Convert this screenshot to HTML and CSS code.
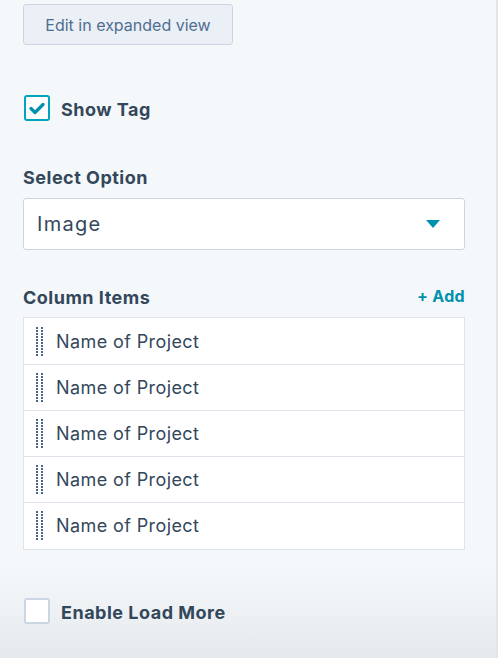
FILE: index.html
```html
<!DOCTYPE html>
<html>
<head>
<meta charset="utf-8">
<link rel="stylesheet" href="styles.css">
</head>
<body>
<svg width="0" height="0" class="defs">
  <defs>
    <pattern id="dots" width="5" height="3" patternUnits="userSpaceOnUse">
      <rect x="0" y="0" width="2" height="2" fill="#4a6684"/>
    </pattern>
  </defs>
</svg>
<div class="panel">
  <button class="btn">Edit in expanded view</button>

  <label class="check-row show-tag">
    <span class="box checked">
      <svg width="16" height="13" viewBox="0 0 16 13"><path d="M2 6.5 L6 10.5 L14 2.5" fill="none" stroke="#0091ae" stroke-width="3.2" stroke-linecap="round" stroke-linejoin="round"/></svg>
    </span>
    <span class="check-label">Show Tag</span>
  </label>

  <div class="field-label select-label">Select Option</div>
  <div class="select">
    <span>Image</span>
    <svg class="caret" width="14" height="8" viewBox="0 0 14 8"><path d="M0 0 H14 L7 8 Z" fill="#0091ae"/></svg>
  </div>

  <div class="list-head">
    <span class="field-label">Column Items</span>
    <span class="add">+ Add</span>
  </div>
  <div class="list">
    <div class="row"><svg class="handle" width="7" height="29"><rect width="7" height="29" fill="url(#dots)"/></svg><span>Name of Project</span></div>
    <div class="row"><svg class="handle" width="7" height="29"><rect width="7" height="29" fill="url(#dots)"/></svg><span>Name of Project</span></div>
    <div class="row"><svg class="handle" width="7" height="29"><rect width="7" height="29" fill="url(#dots)"/></svg><span>Name of Project</span></div>
    <div class="row"><svg class="handle" width="7" height="29"><rect width="7" height="29" fill="url(#dots)"/></svg><span>Name of Project</span></div>
    <div class="row"><svg class="handle" width="7" height="29"><rect width="7" height="29" fill="url(#dots)"/></svg><span>Name of Project</span></div>
  </div>

  <label class="check-row load-more">
    <span class="box"></span>
    <span class="check-label">Enable Load More</span>
  </label>
</div>
</body>
</html>
```

FILE: styles.css
```css
html, body {
  margin: 0;
  height: 100%;
}
body {
  width: 498px;
  height: 658px;
  overflow: hidden;
  font-family: "Inter", "Liberation Sans", sans-serif;
  color: #33475b;
  background: linear-gradient(to bottom, #f5f8fa 0, #f5f8fa 565px, #eceff2 625px, #e6e9ec 658px);
}
.defs {
  position: absolute;
  width: 0;
  height: 0;
}
.panel {
  box-sizing: border-box;
  width: 498px;
  height: 658px;
  padding: 4px 0 0 23px;
  border-right: 2px solid #e2e6ea;
  display: flex;
  flex-direction: column;
  align-items: flex-start;
}
.btn {
  width: 210px;
  height: 41px;
  box-sizing: border-box;
  background: #eaf0f6;
  border: 1px solid #cbd6e2;
  border-radius: 3px;
  color: #506e91;
  font-family: inherit;
  font-size: 16px;
  padding: 0;
}
.check-row {
  display: flex;
  align-items: center;
  gap: 11px;
}
.show-tag { margin-top: 50px; margin-left: 1px; }
.load-more { margin-top: 48px; margin-left: 1px; }
.box {
  width: 26px;
  height: 26px;
  box-sizing: border-box;
  border: 2px solid #cbd6e2;
  border-radius: 3px;
  background: #fff;
  display: flex;
  align-items: center;
  justify-content: center;
}
.box.checked { border-color: #00a4bd; }
.check-label,
.field-label {
  font-size: 18px;
  font-weight: 700;
  letter-spacing: 0.5px;
  color: #33475b;
  padding-top: 3px;
}
.select-label { margin-top: 43px; }
.select {
  margin-top: 10px;
  width: 442px;
  height: 52px;
  box-sizing: border-box;
  background: #fff;
  border: 1px solid #cbd6e2;
  border-radius: 3px;
  display: flex;
  align-items: center;
  justify-content: space-between;
  padding: 0 24px 0 13px;
  font-size: 20px;
  letter-spacing: 1.3px;
  color: #33475b;
}
.list-head {
  margin-top: 34px;
  width: 442px;
  display: flex;
  justify-content: space-between;
  align-items: center;
}
.add {
  color: #0091ae;
  font-weight: 700;
  font-size: 16px;
  letter-spacing: 0.3px;
}
.list {
  margin-top: 9px;
  width: 442px;
  box-sizing: border-box;
  padding: 1px 0;
  background: #fff;
  border: 1px solid #dfe3eb;
}
.row {
  height: 45px;
  display: flex;
  align-items: center;
  gap: 13px;
  padding-left: 12px;
  font-size: 18px;
  letter-spacing: 0.4px;
  color: #33475b;
}
.row + .row { border-top: 1px solid #dfe3eb; }
.handle {
  flex: none;
  display: block;
}
```
